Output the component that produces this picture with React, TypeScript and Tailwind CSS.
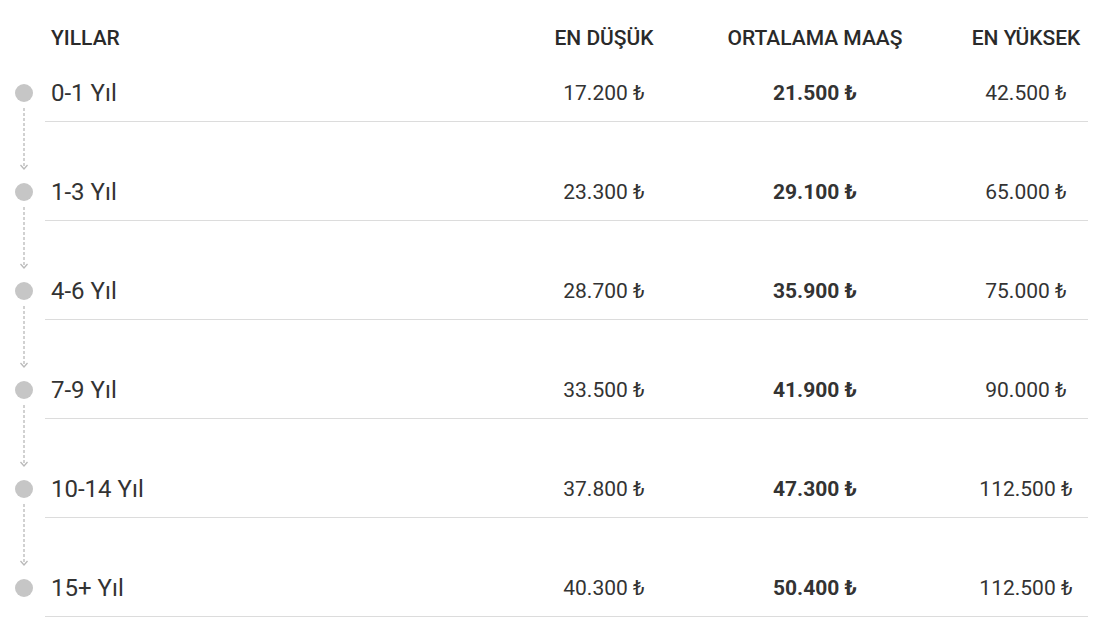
import React from 'react';

interface Row {
    years: string;
    min: string;
    avg: string;
    max: string;
}

const ROWS: Row[] = [
    { years: '0-1 Yıl', min: '17.200', avg: '21.500', max: '42.500' },
    { years: '1-3 Yıl', min: '23.300', avg: '29.100', max: '65.000' },
    { years: '4-6 Yıl', min: '28.700', avg: '35.900', max: '75.000' },
    { years: '7-9 Yıl', min: '33.500', avg: '41.900', max: '90.000' },
    { years: '10-14 Yıl', min: '37.800', avg: '47.300', max: '112.500' },
    { years: '15+ Yıl', min: '40.300', avg: '50.400', max: '112.500' },
];

const GRID = 'grid grid-cols-[1fr_168px_254px_146px] items-center';

function Connector() {
    return (
        <svg width="10" height="62" viewBox="0 0 10 62" className="mt-[6px] mb-[13px] block">
            <line x1="5" y1="0" x2="5" y2="61" stroke="#b9b9b9" strokeWidth="1.3" strokeDasharray="3 2" />
            <polyline points="1.5,57 5,61 8.5,57" fill="none" stroke="#b9b9b9" strokeWidth="1.3" />
        </svg>
    );
}

export default function App() {
    return (
        <div className="w-[1111px] h-[635px] bg-white flex text-[#333]" style={{ fontFamily: 'Roboto, "Liberation Sans", sans-serif' }}>
            {/* timeline */}
            <div className="w-[45px] pl-[3px] pt-[84px] flex flex-col items-center">
                {ROWS.map((r, i) => (
                    <React.Fragment key={r.years}>
                        <div className="w-[18px] h-[18px] rounded-full bg-[#c6c6c6]" />
                        {i < ROWS.length - 1 && <Connector />}
                    </React.Fragment>
                ))}
            </div>

            <div className="w-[1043px]">
                <div className={`${GRID} mt-[14px] h-[50px] text-[21px] font-medium text-[#2a2a2a]`}>
                    <div className="pl-[6px]">YILLAR</div>
                    <div className="text-center">EN DÜŞÜK</div>
                    <div className="text-center">ORTALAMA MAAŞ</div>
                    <div className="text-center pl-[22px]">EN YÜKSEK</div>
                </div>

                {ROWS.map((r, i) => (
                    <div key={r.years} className={i === 0 ? '' : 'pt-[41px]'}>
                        <div className={`${GRID} h-[58px] border-b border-[#dcdcdc]`}>
                            <div className="pl-[6px] text-[24px] pt-[1px]">{r.years}</div>
                            <div className="text-center text-[21px] pt-[2px]">{r.min} ₺</div>
                            <div className="text-center text-[21px] font-bold pt-[2px]">{r.avg} ₺</div>
                            <div className="text-center text-[21px] pl-[22px] pt-[2px]">{r.max} ₺</div>
                        </div>
                    </div>
                ))}
            </div>
        </div>
    );
}
